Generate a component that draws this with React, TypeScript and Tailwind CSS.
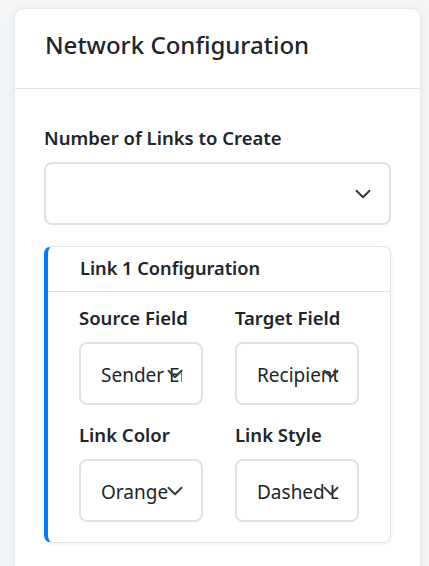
import { ChevronDown } from "lucide-react"

const font = { fontFamily: '"Noto Sans", "Segoe UI", sans-serif' }

function FakeSelect({ value }: { value: string }) {
  return (
    <div className="relative flex h-[63px] items-center overflow-hidden rounded-[8px] border-2 border-[#dee2e6] bg-white pl-[20px] pr-[19px] pt-[3px]">
      <span className="block overflow-hidden whitespace-nowrap text-[19px] text-[#212529]">{value}</span>
      <ChevronDown className="absolute right-[13px] top-1/2 h-[26px] w-[26px] -translate-y-1/2 text-[#343a40]" strokeWidth={1.8} />
    </div>
  )
}

function Field({ label, value }: { label: string; value: string }) {
  return (
    <div className="flex flex-col">
      <label className="mb-[11px] text-[18.5px] font-semibold leading-[27px] text-[#212529]">{label}</label>
      <FakeSelect value={value} />
    </div>
  )
}

export default function App() {
  return (
    <div className="min-h-[566px] bg-[#f5f6f8] pl-[14px] pr-[8px] pt-[8px]" style={font}>
      <div className="rounded-[10px] border border-[#e9ecef] bg-white shadow-[0_2px_8px_rgba(0,0,0,0.08)]">
        <div className="flex h-[80px] items-center border-b border-[#dee2e6] px-[30px] pb-[8px]">
          <h5 className="text-[24px] font-medium text-[#212529]">Network Configuration</h5>
        </div>
        <div className="px-[29px] pb-[40px] pt-[35px]">
          <label className="mb-[11px] block text-[18.5px] font-semibold leading-[27px] text-[#212529]">
            Number of Links to Create
          </label>
          <div className="relative h-[63px] rounded-[8px] border-2 border-[#dee2e6] bg-white">
            <ChevronDown className="absolute right-[13px] top-1/2 h-[26px] w-[26px] -translate-y-1/2 text-[#343a40]" strokeWidth={1.8} />
          </div>

          <div className="mt-[21px] overflow-hidden rounded-[8px] border border-l-4 border-[#e3e6ea] border-l-[#007bff] bg-white shadow-[0_1px_4px_rgba(0,0,0,0.08)]">
            <div className="flex h-[45px] items-center border-b border-[#dee2e6] px-[32px]">
              <h6 className="text-[18.2px] font-semibold text-[#212529]">Link 1 Configuration</h6>
            </div>
            <div className="grid grid-cols-2 gap-x-[32px] gap-y-[16px] px-[31px] pb-[20px] pt-[12px]">
              <Field label="Source Field" value="Sender Email" />
              <Field label="Target Field" value="Recipient Email" />
              <Field label="Link Color" value="Orange" />
              <Field label="Link Style" value="Dashed Line" />
            </div>
          </div>
        </div>
      </div>
    </div>
  )
}
